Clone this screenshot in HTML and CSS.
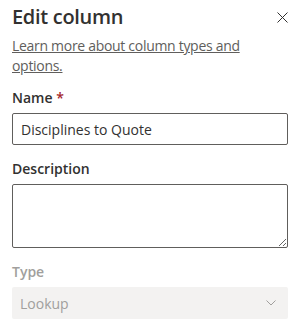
FILE: index.html
```html
<!DOCTYPE html>
<html lang="en">
<head>
    <meta charset="UTF-8">
    <meta name="viewport" content="width=device-width, initial-scale=1.0">
    <title>Edit column</title>
    <link rel="stylesheet" href="styles.css">
</head>
<body>
    <div class="panel">
        <div class="panel-header">
            <h1 class="panel-title">Edit column</h1>
            <button class="close-btn" aria-label="Close">
                <svg width="11" height="11" viewBox="0 0 11 11"><path d="M0.5 0.5 L10.5 10.5 M10.5 0.5 L0.5 10.5" stroke="#323130" stroke-width="1" fill="none"/></svg>
            </button>
        </div>
        <a class="learn-link" href="#">Learn more about column types and options.</a>
        <div class="field first">
            <label class="field-label">Name <span class="required">*</span></label>
            <input type="text" class="text-input" value="Disciplines to Quote">
        </div>
        <div class="field">
            <label class="field-label">Description</label>
            <textarea class="text-area"></textarea>
        </div>
        <div class="field disabled">
            <label class="field-label">Type</label>
            <div class="dropdown">
                <span>Lookup</span>
                <svg width="10" height="6" viewBox="0 0 10 6"><path d="M0.5 0.5 L5 5 L9.5 0.5" stroke="#a19f9d" stroke-width="1" fill="none"/></svg>
            </div>
        </div>
    </div>
</body>
</html>
```

FILE: styles.css
```css
* {
    margin: 0;
    padding: 0;
    box-sizing: border-box;
}
body {
    font-family: 'Open Sans', 'Noto Sans', sans-serif;
    background-color: #fff;
    color: #323130;
    width: 304px;
    height: 334px;
    overflow: hidden;
}
.panel {
    padding: 0 16px 0 12px;
}
.panel-header {
    display: flex;
    align-items: flex-start;
    justify-content: space-between;
    padding-top: 3px;
}
.panel-title {
    font-size: 20px;
    font-weight: 600;
    line-height: 28px;
    letter-spacing: -0.3px;
}
.close-btn {
    border: none;
    background: none;
    width: 11px;
    height: 11px;
    margin-top: 9px;
    display: flex;
}
.learn-link {
    display: block;
    margin-top: 5px;
    font-size: 14px;
    line-height: 20px;
    color: #605e5c;
    text-decoration: underline;
    letter-spacing: -0.3px;
    padding-right: 40px;
}
.field {
    margin-top: 9px;
}
.field.first {
    margin-top: 7px;
}
.field-label {
    display: block;
    font-size: 14px;
    font-weight: 600;
    line-height: 20px;
    padding: 5px 0;
}
.required {
    color: #a4262c;
}
.text-input,
.text-area {
    display: block;
    width: 100%;
    border: 1px solid #605e5c;
    border-radius: 2px;
    font-family: inherit;
    font-size: 14px;
    color: #323130;
    outline: none;
}
.text-input {
    height: 32px;
    padding: 0 8px;
}
.text-area {
    height: 64px;
    padding: 6px 8px;
    resize: vertical;
}
.disabled .field-label {
    color: #a19f9d;
}
.dropdown {
    height: 32px;
    background-color: #f3f2f1;
    border-radius: 2px;
    color: #a19f9d;
    font-size: 14px;
    display: flex;
    align-items: center;
    justify-content: space-between;
    padding: 0 12px 0 8px;
}
```
